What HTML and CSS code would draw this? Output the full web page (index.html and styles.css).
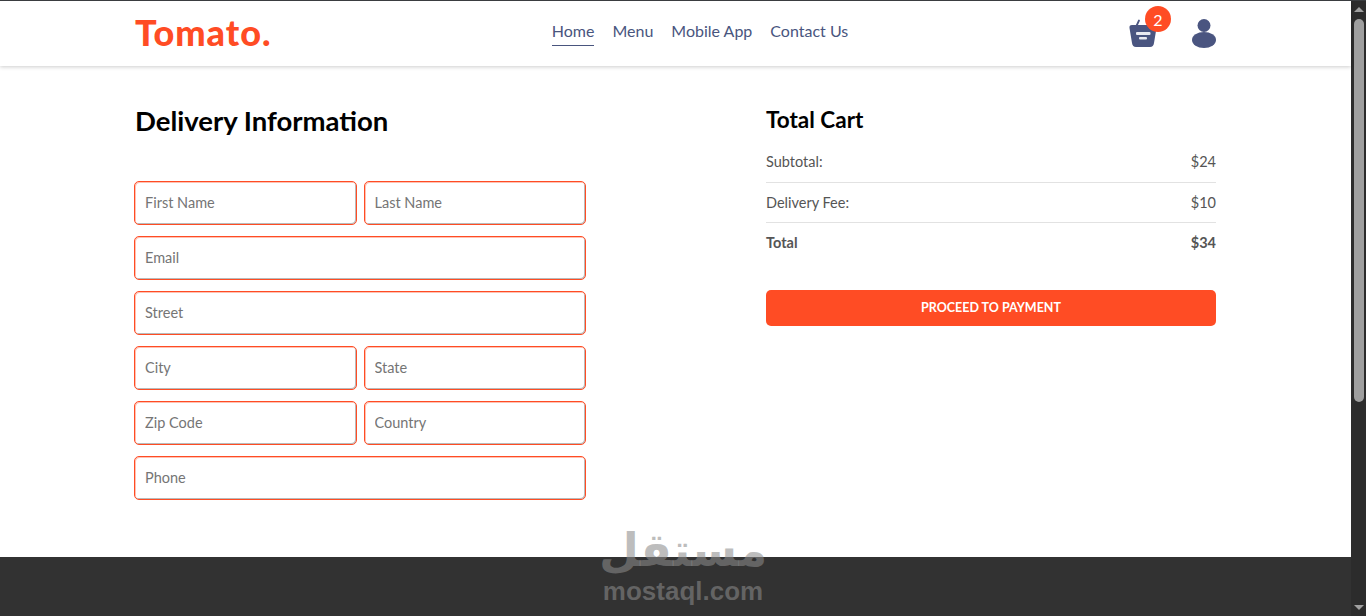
FILE: index.html
```html
<!DOCTYPE html>
<html lang="en">

<head>
    <meta charset="UTF-8">
    <meta name="viewport" content="width=device-width, initial-scale=1.0">
    <title>Tomato</title>
    <link rel="stylesheet" href="styles.css">
</head>

<body>
    <div class="page">
        <nav class="navbar">
            <div class="nav-inner">
                <span class="logo">Tomato.</span>
                <ul class="nav-links">
                    <li class="active">Home</li>
                    <li>Menu</li>
                    <li>Mobile App</li>
                    <li>Contact Us</li>
                </ul>
                <div class="nav-icons">
                    <div class="cart">
                        <svg width="28" height="29" viewBox="0 0 28 29">
                            <path d="M7 8 L10 1.500" stroke="#4a5580" stroke-width="1.800" stroke-linecap="round" fill="none" />
                            <path d="M3 6 H25 Q28 6 27.500 9 L25 24 Q24.500 28 21 28 H7 Q3.500 28 3 24 L0.500 9 Q0 6 3 6 Z" fill="#4a5580" />
                            <rect x="7" y="13" width="14.500" height="3" rx="1" fill="#e8e9f0" />
                            <rect x="10" y="18" width="8" height="2.600" rx="1" fill="#e8e9f0" />
                        </svg>
                        <span class="badge">2</span>
                    </div>
                    <svg width="24" height="29" viewBox="0 0 24 29">
                        <circle cx="12" cy="6.500" r="6.500" fill="#4a5580" />
                        <ellipse cx="12" cy="21" rx="12" ry="8" fill="#4a5580" />
                    </svg>
                </div>
            </div>
        </nav>

        <main class="content">
            <section class="delivery">
                <h1>Delivery Information</h1>
                <form class="delivery-form">
                    <div class="row">
                        <input type="text" placeholder="First Name">
                        <input type="text" placeholder="Last Name">
                    </div>
                    <input type="text" placeholder="Email">
                    <input type="text" placeholder="Street">
                    <div class="row">
                        <input type="text" placeholder="City">
                        <input type="text" placeholder="State">
                    </div>
                    <div class="row">
                        <input type="text" placeholder="Zip Code">
                        <input type="text" placeholder="Country">
                    </div>
                    <input type="text" placeholder="Phone">
                </form>
            </section>

            <section class="totals">
                <h2>Total Cart</h2>
                <div class="total-row first"><span>Subtotal:</span><span>$24</span></div>
                <div class="total-row"><span>Delivery Fee:</span><span>$10</span></div>
                <div class="total-row bold"><span>Total</span><span>$34</span></div>
                <button class="pay-btn" type="button">PROCEED TO PAYMENT</button>
            </section>
        </main>

        <footer class="footer"></footer>

        <!-- watermark sits over the page and footer -->
        <div class="watermark">
            <span class="wm-ar" lang="ar" dir="rtl">مستقل</span>
            <span class="wm-en">mostaql.com</span>
        </div>
    </div>

    <div class="scrollbar">
        <span class="arrow up"></span>
        <span class="thumb"></span>
        <span class="arrow down"></span>
    </div>
</body>

</html>
```

FILE: styles.css
```css
* {
    margin: 0;
    padding: 0;
    box-sizing: border-box;
}

html,
body {
    height: 616px;
    overflow: hidden;
}

body {
    display: flex;
    background-color: white;
    font-family: "Lato", "Liberation Sans", sans-serif;
    border-top: 1px solid #3a3d40;
}

.page {
    flex: 1;
    display: flex;
    flex-direction: column;
    position: relative;
    min-width: 0;
}

/* nav */
.navbar {
    height: 65px;
    background-color: white;
    box-shadow: 0 1px 4px rgba(0, 0, 0, 0.2);
}

.nav-inner {
    width: 1081px;
    height: 100%;
    margin-left: 135px;
    display: flex;
    align-items: center;
    justify-content: space-between;
}

.logo {
    font-size: 36px;
    font-weight: 900;
    letter-spacing: 1px;
    color: #ff4c24;
    width: 136px;
    margin-top: -3px;
}

.nav-links {
    display: flex;
    gap: 18px;
    list-style: none;
    font-size: 16px;
    color: #49557e;
}

.nav-links li {
    padding-bottom: 5px;
    border-bottom: 1px solid transparent;
}

.nav-links .active {
    border-bottom-color: #49557e;
}

.nav-icons {
    display: flex;
    align-items: center;
    gap: 35px;
}

.cart {
    position: relative;
    width: 28px;
    height: 29px;
}

.badge {
    position: absolute;
    top: -13px;
    left: 16px;
    width: 26px;
    height: 26px;
    border-radius: 50%;
    background-color: #ff4c24;
    color: white;
    font-size: 16px;
    display: flex;
    justify-content: center;
    align-items: center;
}

/* main */
.content {
    flex: 1;
    padding: 0 135px;
    display: flex;
    justify-content: space-between;
}

.delivery {
    width: 451px;
    padding-top: 38px;
}

.delivery h1 {
    font-size: 27.5px;
    font-weight: 700;
    color: black;
    line-height: 34px;
    margin-bottom: 43px;
}

.delivery-form {
    display: flex;
    flex-direction: column;
    gap: 11px;
    margin-left: -1px;
}

.row {
    display: flex;
    gap: 7px;
}

.row input {
    width: 0;
    flex: 1;
}

input {
    height: 44px;
    padding: 0 10px 1px;
    border: 1px solid #ff4c24;
    border-radius: 5px;
    box-shadow: inset -1px -1px 0 rgba(130, 130, 130, 0.55), inset 1px 1px 0 rgba(255, 76, 36, 0.35);
    font-family: inherit;
    font-size: 14.5px;
    color: #333;
}

input::placeholder {
    color: #757575;
    opacity: 1;
}

.totals {
    width: 450px;
    padding-top: 40px;
}

.totals h2 {
    font-size: 22.5px;
    font-weight: 700;
    color: black;
    line-height: 28px;
    margin-bottom: 7px;
}

.total-row {
    display: flex;
    justify-content: space-between;
    height: 40px;
    padding-bottom: 1px;
    align-items: center;
    font-size: 14.5px;
    color: #555;
    border-bottom: 1px solid #e2e2e2;
}

.total-row.first {
    height: 42px;
}

.total-row.bold {
    font-weight: 700;
    border-bottom: none;
}

.pay-btn {
    display: block;
    width: 100%;
    height: 36px;
    margin-top: 27px;
    padding-bottom: 1px;
    border: none;
    border-radius: 5px;
    background-color: #ff4c24;
    color: white;
    font-family: inherit;
    font-size: 12.5px;
    font-weight: 700;
}

.footer {
    height: 59px;
    background-color: #323232;
}

/* watermark */
.watermark {
    position: absolute;
    left: 602px;
    top: 520px;
    width: 162px;
    display: flex;
    flex-direction: column;
    align-items: center;
    color: rgba(139, 139, 139, 0.56);
    font-weight: 700;
    pointer-events: none;
}

.wm-ar {
    font-family: "DejaVu Sans", sans-serif;
    font-size: 46px;
    line-height: 58px;
}

.wm-en {
    font-family: "Liberation Sans", sans-serif;
    font-size: 26px;
    line-height: 26px;
    margin-top: -1px;
}

/* scrollbar */
.scrollbar {
    width: 15px;
    background-color: #2c2c2c;
    display: flex;
    flex-direction: column;
    align-items: center;
}

.arrow {
    border-left: 5px solid transparent;
    border-right: 5px solid transparent;
}

.arrow.up {
    margin-top: 6px;
    border-bottom: 5px solid #a0a0a0;
}

.arrow.down {
    margin-top: auto;
    margin-bottom: 6px;
    border-top: 5px solid #a0a0a0;
}

.thumb {
    width: 10px;
    height: 383px;
    margin-top: 7px;
    border-radius: 5px;
    background-color: #9f9f9f;
}
```
